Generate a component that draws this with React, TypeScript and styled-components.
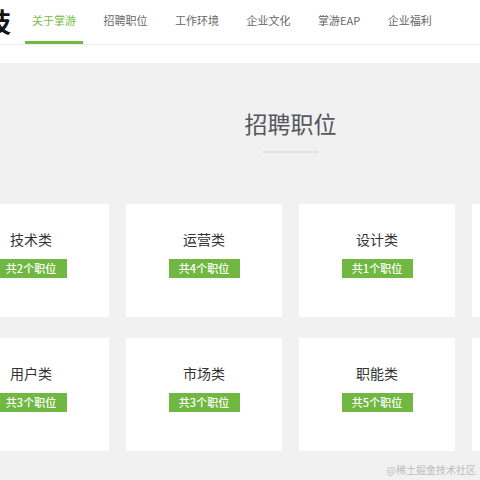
import React from "react";
import styled, { createGlobalStyle } from "styled-components";

const GlobalStyle = createGlobalStyle`
  html, body { margin: 0; padding: 0; background: #fff; }
  body {
    font-family: "Noto Sans CJK SC", "Liberation Sans", sans-serif;
    overflow: hidden;
  }
`;

const Page = styled.div`
  width: 480px;
  height: 480px;
  overflow: hidden;
  position: relative;
  background: #fff;
`;

const Header = styled.header`
  height: 44px;
  border-bottom: 1px solid #eeeeee;
  display: flex;
  align-items: flex-start;
  margin-left: -93px;
  gap: 14px;
`;

const Logo = styled.div`
  font-size: 26px;
  font-weight: 700;
  color: #151515;
  line-height: 42px;
  white-space: nowrap;
`;

const Nav = styled.nav`
  display: flex;
  gap: 13.5px;
`;

const NavItem = styled.a<{ $active?: boolean }>`
  box-sizing: border-box;
  height: 44px;
  padding: 12px 7px 0;
  font-size: 11px;
  line-height: 17px;
  color: ${(p) => (p.$active ? "#74bd46" : "#666666")};
  border-bottom: 3px solid ${(p) => (p.$active ? "#72b944" : "transparent")};
  white-space: nowrap;
  text-decoration: none;
`;

const Main = styled.main`
  margin-top: 18px;
  background: #f1f1f1;
  height: 420px;
`;

const Stage = styled.div`
  width: 675px;
  margin-left: -47px;
  padding-top: 45px;
  display: flex;
  flex-direction: column;
  align-items: center;
`;

const SectionTitle = styled.h2`
  margin: 0;
  font-size: 23px;
  line-height: 30px;
  font-weight: 400;
  color: #54575c;
`;

const Divider = styled.div`
  width: 56px;
  height: 2px;
  background: #e2e2e2;
  margin-top: 13px;
`;

const Grid = styled.div`
  margin-top: 51px;
  display: grid;
  grid-template-columns: repeat(4, 156px);
  column-gap: 17px;
  row-gap: 21px;
`;

const Card = styled.div`
  height: 113px;
  background: #ffffff;
  box-sizing: border-box;
  padding-top: 25px;
  display: flex;
  flex-direction: column;
  align-items: center;
`;

const CardTitle = styled.div`
  font-size: 14px;
  line-height: 20px;
  color: #333333;
`;

const Badge = styled.div`
  margin-top: 10px;
  height: 19px;
  line-height: 19px;
  padding: 0 10px;
  min-width: 51px;
  text-align: center;
  background: #71b843;
  color: #ffffff;
  font-size: 11px;
  font-weight: 500;
  white-space: nowrap;
`;

const Watermark = styled.div`
  position: absolute;
  right: 4px;
  bottom: 3px;
  font-size: 10px;
  line-height: 14px;
  color: #bdbdbd;
`;

const navItems = ["关于掌游", "招聘职位", "工作环境", "企业文化", "掌游EAP", "企业福利"];

const jobs = [
  { name: "技术类", count: 2 },
  { name: "运营类", count: 4 },
  { name: "设计类", count: 1 },
  { name: "产品类", count: 2 },
  { name: "用户类", count: 3 },
  { name: "市场类", count: 3 },
  { name: "职能类", count: 5 },
  { name: "游戏类", count: 2 },
];

export default function App() {
  return (
    <Page>
      <GlobalStyle />
      <Header>
        <Logo>掌游科技</Logo>
        <Nav>
          {navItems.map((n, i) => (
            <NavItem key={n} $active={i === 0}>
              {n}
            </NavItem>
          ))}
        </Nav>
      </Header>
      <Main>
        <Stage>
          <SectionTitle>招聘职位</SectionTitle>
          <Divider />
          <Grid>
            {jobs.map((j) => (
              <Card key={j.name}>
                <CardTitle>{j.name}</CardTitle>
                <Badge>共{j.count}个职位</Badge>
              </Card>
            ))}
          </Grid>
        </Stage>
      </Main>
      <Watermark>@稀土掘金技术社区</Watermark>
    </Page>
  );
}
